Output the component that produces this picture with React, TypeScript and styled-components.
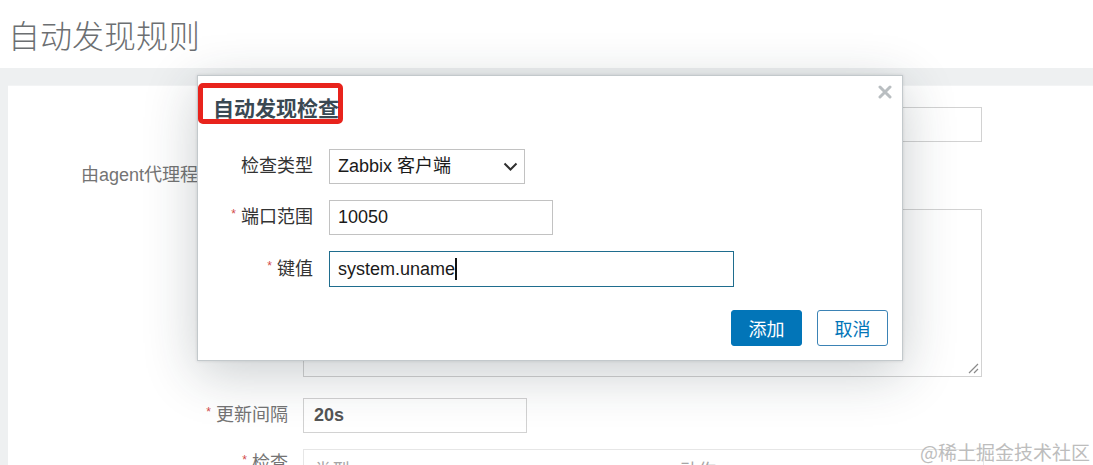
import React from "react";
import styled, { createGlobalStyle } from "styled-components";

const GlobalStyle = createGlobalStyle`
  html, body {
    margin: 0;
    padding: 0;
    background: #ffffff;
  }
  body {
    font-family: "Liberation Sans", "Noto Sans CJK SC", sans-serif;
  }
  * {
    box-sizing: border-box;
  }
`;

const ChevronDown = () => (
  <svg width="15" height="9" viewBox="0 0 15 9">
    <path d="M1.5 1.5 L7.5 7.5 L13.5 1.5" fill="none" stroke="#2f2f2f" strokeWidth="2" />
  </svg>
);

const CloseIcon = () => (
  <svg width="14" height="14" viewBox="0 0 14 14">
    <path d="M2 2 L12 12 M12 2 L2 12" stroke="#b9bec1" strokeWidth="3" strokeLinecap="round" />
  </svg>
);

const ResizeGrip = () => (
  <svg width="12" height="12" viewBox="0 0 12 12">
    <path d="M2 11 L11 2 M7 11 L11 7" stroke="#8a8a8a" strokeWidth="1.2" />
  </svg>
);

const App: React.FC = () => {
  return (
    <>
      <GlobalStyle />
      <Page>
        <Header>
          <PageTitle>自动发现规则</PageTitle>
        </Header>
        <Band>
          <Card>
            <FormList>
              <Row>
                <FieldLabel>名称</FieldLabel>
                <TextBox $width={679} />
              </Row>
              <Row>
                <FieldLabel>由agent代理程序自动发现</FieldLabel>
                <TextBox $width={260}>无agent代理程序</TextBox>
              </Row>
              <Row>
                <FieldLabel $alignTop>IP范围</FieldLabel>
                <TextArea>
                  <GripSlot>
                    <ResizeGrip />
                  </GripSlot>
                </TextArea>
              </Row>
              <Row $spaceBefore={5}>
                <FieldLabel>
                  <Required>*</Required>更新间隔
                </FieldLabel>
                <TextBox $width={224} $strong>
                  20s
                </TextBox>
              </Row>
              <Row>
                <FieldLabel $alignTop>
                  <Required>*</Required>检查
                </FieldLabel>
                <ChecksTable>
                  <ColHead $width={366}>类型</ColHead>
                  <ColHead $width={200}>动作</ColHead>
                </ChecksTable>
              </Row>
            </FormList>
          </Card>
        </Band>

        <Dialog>
          <CloseButton>
            <CloseIcon />
          </CloseButton>
          <Highlight>
            <DialogTitle>自动发现检查</DialogTitle>
          </Highlight>
          <DialogForm>
            <DialogRow>
              <DialogLabel>检查类型</DialogLabel>
              <Select $width={196}>
                <span>Zabbix 客户端</span>
                <ChevronDown />
              </Select>
            </DialogRow>
            <DialogRow>
              <DialogLabel>
                <Required>*</Required>端口范围
              </DialogLabel>
              <Input $width={224}>10050</Input>
            </DialogRow>
            <DialogRow>
              <DialogLabel>
                <Required>*</Required>键值
              </DialogLabel>
              <Input $width={405} $height={36} $focused>
                system.uname
                <Caret />
              </Input>
            </DialogRow>
          </DialogForm>
          <ButtonBar>
            <PrimaryButton>添加</PrimaryButton>
            <GhostButton>取消</GhostButton>
          </ButtonBar>
        </Dialog>

        <Watermark>@稀土掘金技术社区</Watermark>
      </Page>
    </>
  );
};
export default App;

const Page = styled.div`
  position: relative;
  width: 1093px;
  height: 465px;
  overflow: hidden;
  background: #ffffff;
`;
const Header = styled.div`
  height: 68px;
  padding: 13px 0 0 8px;
`;
const PageTitle = styled.h1`
  margin: 0;
  font-family: "Noto Sans CJK SC", sans-serif;
  font-weight: 300;
  font-size: 32px;
  line-height: 42px;
  color: #6c6f72;
`;
const Band = styled.div`
  background: #eef0f1;
  padding: 17px 0 0 8px;
  height: 397px;
`;
const Card = styled.div`
  background: #ffffff;
  height: 100%;
  border-top: 1px solid #f3f4f5;
`;
const FormList = styled.div`
  display: flex;
  flex-direction: column;
  gap: 16px;
  padding-top: 21px;
`;
const Row = styled.div<{ $spaceBefore?: number }>`
  display: flex;
  gap: 15px;
  align-items: flex-start;
  margin-top: ${(p) => p.$spaceBefore || 0}px;
`;
const FieldLabel = styled.div<{ $alignTop?: boolean }>`
  width: 280px;
  height: 35px;
  flex-shrink: 0;
  text-align: right;
  font-size: 18px;
  line-height: ${(p) => (p.$alignTop ? "28px" : "35px")};
  color: #747474;
  white-space: nowrap;
`;
const Required = styled.span`
  color: #d24a4a;
  font-size: 12px;
  line-height: 1;
  vertical-align: 5px;
  margin-right: 5px;
`;
const TextBox = styled.div<{ $width: number; $strong?: boolean }>`
  width: ${(p) => p.$width}px;
  height: 35px;
  border: 1px solid #d2d2d2;
  padding: 0 10px;
  font-size: 18px;
  line-height: 33px;
  color: #555555;
  font-weight: ${(p) => (p.$strong ? "bold" : "normal")};
`;
const TextArea = styled.div`
  width: 679px;
  height: 168px;
  border: 1px solid #d2d2d2;
  display: flex;
  align-items: flex-end;
  justify-content: flex-end;
`;
const GripSlot = styled.div`
  width: 12px;
  height: 12px;
  margin: 0 2px 2px 0;
  display: flex;
`;
const ChecksTable = styled.div`
  width: 681px;
  height: 60px;
  border: 1px solid #e6e6e6;
  display: flex;
  padding: 6px 10px 0;
`;
const ColHead = styled.div<{ $width: number }>`
  width: ${(p) => p.$width}px;
  font-size: 18px;
  color: #a5a5a5;
`;

const Dialog = styled.div`
  position: absolute;
  left: 197px;
  top: 75px;
  width: 706px;
  background: #ffffff;
  border: 1px solid #c3c9cc;
  box-shadow: 0 0 3px rgba(0, 0, 0, 0.12), 0 12px 50px rgba(30, 45, 55, 0.24);
  padding: 7px 14px 14px 0;
`;
const CloseButton = styled.div`
  position: absolute;
  top: 9px;
  right: 10px;
  width: 14px;
  height: 14px;
  display: flex;
  cursor: pointer;
`;
const Highlight = styled.div`
  width: 145px;
  height: 41px;
  border: 5px solid #e8231c;
  border-radius: 5px;
  padding: 7px 0 0 10px;
  white-space: nowrap;
`;
const DialogTitle = styled.h4`
  margin: 0;
  font-family: "Noto Sans CJK SC", sans-serif;
  font-size: 21px;
  line-height: 24px;
  font-weight: bold;
  color: #3a4852;
`;
const DialogForm = styled.div`
  display: flex;
  flex-direction: column;
  gap: 16px;
  margin-top: 25px;
`;
const DialogRow = styled.div`
  display: flex;
  align-items: center;
  gap: 16px;
`;
const DialogLabel = styled.div`
  width: 115px;
  height: 35px;
  flex-shrink: 0;
  text-align: right;
  font-size: 18px;
  line-height: 35px;
  color: #333333;
  white-space: nowrap;
`;
const Input = styled.div<{ $width: number; $height?: number; $focused?: boolean }>`
  width: ${(p) => p.$width}px;
  height: ${(p) => p.$height || 35}px;
  border: 1px solid ${(p) => (p.$focused ? "#1f6d8e" : "#c2c2c2")};
  padding: 0 8px;
  font-size: 18px;
  line-height: 33px;
  color: #1a1a1a;
  display: flex;
  align-items: center;
`;
const Select = styled(Input)`
  justify-content: space-between;
  padding-right: 6px;
`;
const Caret = styled.span`
  display: inline-block;
  width: 2px;
  height: 22px;
  background: #111111;
`;
const ButtonBar = styled.div`
  display: flex;
  justify-content: flex-end;
  gap: 15px;
  margin-top: 23px;
`;
const PrimaryButton = styled.button`
  width: 71px;
  height: 36px;
  border: 1px solid #0275b8;
  border-radius: 3px;
  background: #0275b8;
  color: #ffffff;
  font-family: "Noto Sans CJK SC", sans-serif;
  font-size: 18px;
  padding: 0;
`;
const GhostButton = styled(PrimaryButton)`
  background: #ffffff;
  color: #0275b8;
  border-color: #3b83b5;
`;
const Watermark = styled.div`
  position: absolute;
  right: 3px;
  top: 441px;
  font-family: "Noto Sans CJK SC", sans-serif;
  font-size: 19px;
  line-height: 22px;
  color: #bdbdbd;
  white-space: nowrap;
`;
